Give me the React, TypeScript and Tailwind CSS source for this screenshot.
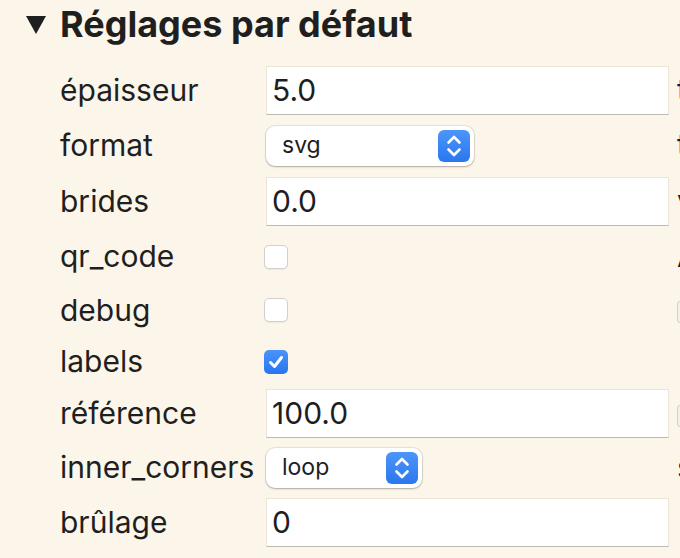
import React from "react";

type Row =
  | { label: string; kind: "input"; value: string; desc: React.ReactNode; h: string }
  | { label: string; kind: "select"; value: string; w: string; desc: React.ReactNode; h: string }
  | { label: string; kind: "check"; checked: boolean; desc: React.ReactNode; h: string };

const CodeBox = () => (
  <span className="inline-block h-[22px] w-[60px] rounded-[3px] border border-[#d6d1c7] bg-[#f4f0e7] align-middle" />
);

const rows: Row[] = [
  { label: "épaisseur", kind: "input", value: "5.0", desc: "taille", h: "h-[56px]" },
  { label: "format", kind: "select", value: "svg", w: "w-[208px]", desc: "type", h: "h-[55px]" },
  { label: "brides", kind: "input", value: "0.0", desc: "valeur", h: "h-[56px]" },
  { label: "qr_code", kind: "check", checked: false, desc: "Ajoute", h: "h-[55px]" },
  { label: "debug", kind: "check", checked: false, desc: <CodeBox />, h: "h-[52px]" },
  { label: "labels", kind: "check", checked: true, desc: "", h: "h-[51px]" },
  { label: "référence", kind: "input", value: "100.0", desc: <CodeBox />, h: "h-[53px]" },
  { label: "inner_corners", kind: "select", value: "loop", w: "w-[156px]", desc: "s", h: "h-[55px]" },
  { label: "brûlage", kind: "input", value: "0", desc: "", h: "h-[55px]" },
];

function Stepper() {
  return (
    <span className="absolute right-[4px] top-[4px] flex h-[32px] w-[32px] items-center justify-center rounded-[6px] bg-gradient-to-b from-[#4c95fa] to-[#2a77ef]">
      <svg width="32" height="32" viewBox="0 0 32 32" fill="none" stroke="white" strokeWidth="2.6" strokeLinecap="round" strokeLinejoin="round">
        <path d="M10.5 12.5 L16 7 L21.5 12.5" />
        <path d="M10.5 19.5 L16 25 L21.5 19.5" />
      </svg>
    </span>
  );
}

function Control({ row }: { row: Row }) {
  if (row.kind === "input") {
    return (
      <div className="ml-[2px] flex h-[49px] w-[403px] items-center border border-[#ece5d6] border-b-[#bdbab4] bg-white pl-[5px] text-[30px] text-[#1e1e1e]">
        {row.value}
      </div>
    );
  }
  if (row.kind === "select") {
    return (
      <div
        className={`relative ml-[2px] flex h-[40px] ${row.w} items-center rounded-[9px] bg-white pl-[16px] text-[23px] text-[#1e1e1e] shadow-[0_0_0_1px_rgba(0,0,0,0.08),0_1px_2px_rgba(0,0,0,0.25)]`}
      >
        {row.value}
        <Stepper />
      </div>
    );
  }
  return row.checked ? (
    <span className="flex h-[24px] w-[24px] items-center justify-center rounded-[5px] bg-gradient-to-b from-[#4a93fa] to-[#2776ef]">
      <svg width="24" height="24" viewBox="0 0 24 24" fill="none" stroke="white" strokeWidth="3" strokeLinecap="round" strokeLinejoin="round">
        <path d="M6.5 12.5 L10.5 16.5 L17.5 7.5" />
      </svg>
    </span>
  ) : (
    <span className="block h-[24px] w-[24px] rounded-[5px] border border-[#d2d0cc] bg-white shadow-[0_1px_1px_rgba(0,0,0,0.06)]" />
  );
}

export default function App() {
  return (
    <div className="h-[558px] w-[680px] overflow-hidden bg-[#fcf6ea] font-['Inter','Noto_Sans',sans-serif] text-[#1f1f1f]">
      <div className="mt-[4px] mb-[18px] flex h-[40px] items-center whitespace-nowrap pl-[26px]">
        <svg width="20" height="18" viewBox="0 0 20 18" className="mr-[14px] mt-[2px]">
          <polygon points="0,0 20,0 10,18" fill="#1f1f1f" />
        </svg>
        <h2 className="text-[36px] font-bold leading-[40px]">Réglages par défaut</h2>
      </div>
      <div className="flex flex-col">
        {rows.map((row) => (
          <div key={row.label} className={`flex ${row.h} items-center whitespace-nowrap`}>
            <div className="w-[264px] shrink-0 pl-[60px] text-[30px]">{row.label}</div>
            <div className="w-[413px] shrink-0">
              <Control row={row} />
            </div>
            <div className="shrink-0 text-[30px]">{row.desc}</div>
          </div>
        ))}
      </div>
    </div>
  );
}
